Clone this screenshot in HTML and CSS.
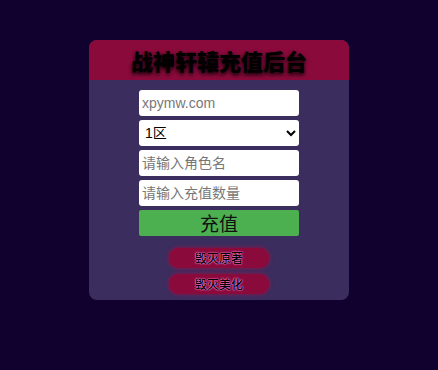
FILE: index.html
```html
<!DOCTYPE html>
<html lang="zh">
<head>
<meta charset="utf-8">
<title>战神轩辕充值后台</title>
<link rel="stylesheet" href="styles.css">
</head>
<body>
<div class="card">
  <div class="header"><h1 class="title">战神轩辕充值后台</h1></div>
  <div class="form">
    <input class="field" type="text" placeholder="xpymw.com">
    <select class="field select"><option>1区</option></select>
    <input class="field" type="text" placeholder="请输入角色名">
    <input class="field" type="text" placeholder="请输入充值数量">
    <button class="submit">充值</button>
    <div class="links">
      <button class="pill">毁灭原著</button>
      <button class="pill">毁灭美化</button>
    </div>
  </div>
</div>
</body>
</html>
```
FILE: styles.css
```css
html, body {
  margin: 0;
  padding: 0;
}
body {
  background: #10012f;
  width: 438px;
  height: 370px;
  font-family: "Liberation Sans", "Noto Sans CJK SC", sans-serif;
  display: flex;
  justify-content: center;
  padding-top: 40px;
  box-sizing: border-box;
}
.card {
  width: 260px;
  height: 260px;
  background: #3b2d5e;
  border-radius: 8px;
  overflow: hidden;
  display: flex;
  flex-direction: column;
}
.header {
  background: #8b0a3c;
  height: 40px;
  display: flex;
  align-items: center;
  justify-content: center;
}
.title {
  margin: 0;
  font-family: "Noto Sans CJK SC", sans-serif;
  font-size: 22px;
  font-weight: 900;
  color: #000;
  text-shadow: 0 2px 4px #000;
  line-height: 1;
}
.form {
  display: flex;
  flex-direction: column;
  align-items: center;
  padding-top: 10px;
  gap: 4px;
}
.field {
  width: 160px;
  height: 26px;
  box-sizing: border-box;
  border: none;
  border-radius: 3px;
  background: #fff;
  padding: 0 3px;
  font-family: "Liberation Sans", "Noto Sans CJK SC", sans-serif;
  font-size: 14px;
  color: #000;
  outline: none;
}
.field::placeholder {
  color: #777;
}
.select {
  padding: 0 2px;
}
.submit {
  width: 160px;
  height: 26px;
  border: none;
  border-radius: 2px;
  background: #4caf50;
  color: #111;
  font-family: "Noto Sans CJK SC", sans-serif;
  font-size: 19px;
  line-height: 26px;
  padding: 0;
}
.links {
  display: flex;
  flex-direction: column;
  align-items: center;
  gap: 6px;
  margin-top: 8px;
}
.pill {
  width: 100px;
  height: 20px;
  border: none;
  border-radius: 9px;
  background: #8b0a3c;
  box-shadow: 0 0 4px #a0104a;
  color: #000;
  font-family: "Noto Sans CJK SC", sans-serif;
  font-size: 12px;
  font-weight: 500;
  line-height: 20px;
  padding: 0;
  text-shadow: 0 0 2px #ff6fd0, 0 0 1px #ff9ae0, 0 0 1px #ff9ae0;
}
```
